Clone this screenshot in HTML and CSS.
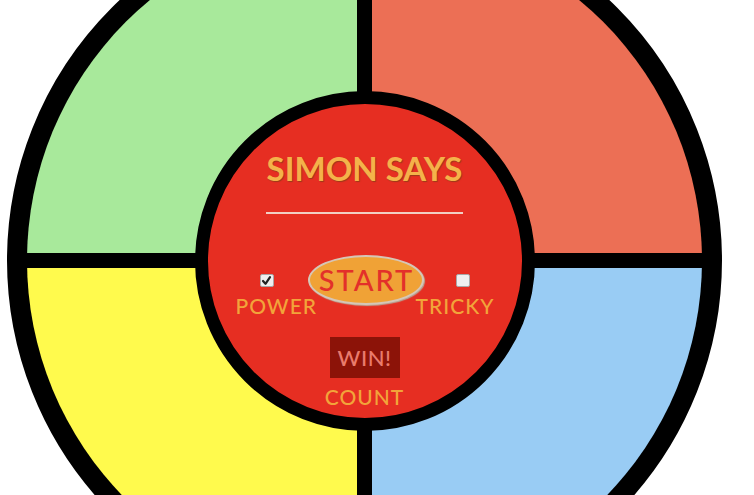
FILE: index.html
```html
<!DOCTYPE html>
<html lang="en">
<head>
<meta charset="utf-8">
<title>Simon Says</title>
<link rel="stylesheet" href="styles.css">
</head>
<body>
<div class="board">
  <div class="pad pad-green"></div>
  <div class="pad pad-red"></div>
  <div class="pad pad-yellow"></div>
  <div class="pad pad-blue"></div>
  <div class="console">
    <h1 class="title">SIMON SAYS</h1>
    <div class="rule"></div>
    <div class="controls">
      <div class="toggle toggle-power">
        <span class="check checked"><svg viewBox="0 0 13 13" width="13" height="13"><path d="M3 7 L5.5 9.8 L10 3.2" fill="none" stroke="#222" stroke-width="2.2" stroke-linecap="round" stroke-linejoin="round"/></svg></span>
        <span class="label">POWER</span>
      </div>
      <button class="start">START</button>
      <div class="toggle toggle-tricky">
        <span class="check"></span>
        <span class="label">TRICKY</span>
      </div>
    </div>
    <div class="count-box">WIN!</div>
    <div class="count-label">COUNT</div>
  </div>
</div>
</body>
</html>
```

FILE: styles.css
```css
html, body {
  margin: 0;
  padding: 0;
  background: #ffffff;
  width: 754px;
  height: 495px;
  overflow: hidden;
}

body {
  font-family: Lato, "Open Sans", sans-serif;
}

.board {
  position: relative;
  box-sizing: border-box;
  width: 715px;
  height: 715px;
  margin-left: 7px;
  margin-top: -97px;
  border: 20px solid #000;
  border-radius: 50%;
  background: #000;
  overflow: hidden;
  display: grid;
  grid-template-columns: 1fr 1fr;
  grid-template-rows: 1fr 1fr;
  gap: 15px;
}

.pad-green { background: #a8e99b; }
.pad-red { background: #ec6f55; }
.pad-yellow { background: #fffa4d; }
.pad-blue { background: #99ccf4; }

.console {
  position: absolute;
  inset: 0;
  margin: auto;
  box-sizing: border-box;
  width: 340px;
  height: 340px;
  border: 13px solid #000;
  border-radius: 50%;
  background: #e62e22;
  display: flex;
  flex-direction: column;
  align-items: center;
  padding-top: 48px;
}

.title {
  margin: 0;
  font-size: 33px;
  line-height: 1;
  font-weight: 700;
  color: #f4b24a;
  text-shadow: 1px 1px 1px #9c3a18;
  letter-spacing: 0;
}

.rule {
  width: 197px;
  height: 2px;
  margin-top: 27px;
  background: #f1cfc4;
}

.controls {
  display: flex;
  align-items: flex-start;
  margin-top: 41px;
}

.toggle {
  display: flex;
  flex-direction: column;
  padding-top: 19px;
}

.toggle-power {
  width: 80px;
  margin-right: -8px;
}

.toggle-tricky {
  width: 78px;
  margin-left: -8px;
}

.check {
  box-sizing: border-box;
  width: 14px;
  height: 13px;
  background: #efefef;
  border: 1px solid #a8a8a8;
  border-radius: 2px;
  display: block;
}

.check svg {
  display: block;
  margin: -1px 0 0 -1px;
}

.toggle-power .check { margin-left: 24px; }
.toggle-tricky .check { margin-left: 40px; }

.label {
  display: block;
  margin-top: 8px;
  font-size: 21px;
  line-height: 1;
  font-weight: 500;
  color: #f2a43a;
  text-align: center;
  letter-spacing: 1px;
  white-space: nowrap;
}

.start {
  position: relative;
  z-index: 1;
  box-sizing: border-box;
  width: 116px;
  height: 50px;
  border: 2px solid #d6c6b6;
  border-radius: 50%;
  background: #f0a236;
  box-shadow: 1px 1px 1px #b8a898;
  color: #e3302a;
  font-family: Lato, "Open Sans", sans-serif;
  font-size: 29px;
  font-weight: 500;
  letter-spacing: 2px;
  line-height: 1;
  padding: 0 0 0 2px;
  display: flex;
  align-items: center;
  justify-content: center;
}

.count-box {
  margin-top: 21px;
  width: 70px;
  height: 41px;
  background: #8c1308;
  color: #e97b6c;
  font-size: 22px;
  font-weight: 500;
  display: flex;
  align-items: center;
  justify-content: center;
  letter-spacing: 0.5px;
}

.count-label {
  margin-top: 8px;
  font-size: 21px;
  line-height: 1;
  font-weight: 500;
  color: #f2a43a;
  letter-spacing: 1px;
}
```
